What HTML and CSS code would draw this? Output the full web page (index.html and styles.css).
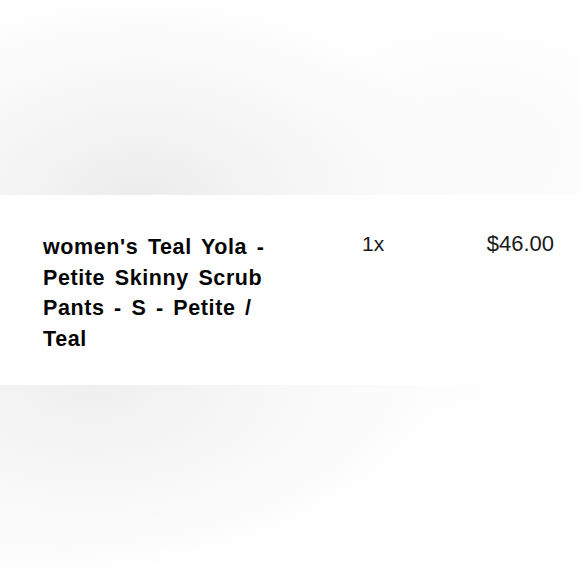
FILE: index.html
```html
<!DOCTYPE html>
<html lang="en">
<head>
    <meta charset="UTF-8">
    <meta name="viewport" content="width=device-width, initial-scale=1.0">
    <title>Order item</title>
    <link rel="stylesheet" href="styles.css">
</head>
<body>
    <div class="page">
        <div class="shade shade-top"></div>
        <div class="line-item">
            <div class="item-name">women's Teal Yola - Petite Skinny Scrub Pants - S - Petite / Teal</div>
            <div class="item-qty">1x</div>
            <div class="item-price">$46.00</div>
        </div>
        <div class="shade shade-bottom"></div>
    </div>
</body>
</html>
```

FILE: styles.css
```css
    body {
        margin: 0;
        font-family: 'Liberation Sans', Arial, sans-serif;
        background: #ffffff;
        color: #111;
    }
    .page {
        width: 580px;
        height: 580px;
        display: flex;
        flex-direction: column;
        overflow: hidden;
    }
    .shade {
        flex: none;
        height: 195px;
    }
    .shade-top {
        background:
            radial-gradient(ellipse 320px 200px at 140px 200px, #ececec 0%, #f6f6f6 50%, rgba(255,255,255,0) 100%),
            radial-gradient(ellipse 200px 130px at 470px 150px, #fafafa 0%, rgba(255,255,255,0) 100%),
            #fefefe;
    }
    .shade-bottom {
        background:
            radial-gradient(ellipse 340px 190px at 90px 0px, #efefef 0%, #f8f8f8 55%, rgba(255,255,255,0) 100%),
            linear-gradient(160deg, #fcfcfc 0%, #fdfdfd 40%, #ffffff 60%);
    }
    .line-item {
        flex: none;
        height: 190px;
        background: #ffffff;
        box-sizing: border-box;
        padding: 37px 26px 0 43px;
        display: grid;
        grid-template-columns: 232px 1fr auto;
        align-items: start;
    }
    .item-name {
        font-size: 21.5px;
        font-weight: bold;
        line-height: 30.5px;
        letter-spacing: 0.6px;
        word-spacing: 3px;
        color: #050505;
    }
    .item-qty,
    .item-price {
        line-height: 30px;
        margin-top: -3px;
        color: #1a1a1a;
    }
    .item-qty {
        font-size: 21px;
        padding-left: 87px;
    }
    .item-price {
        font-size: 22px;
    }
```
